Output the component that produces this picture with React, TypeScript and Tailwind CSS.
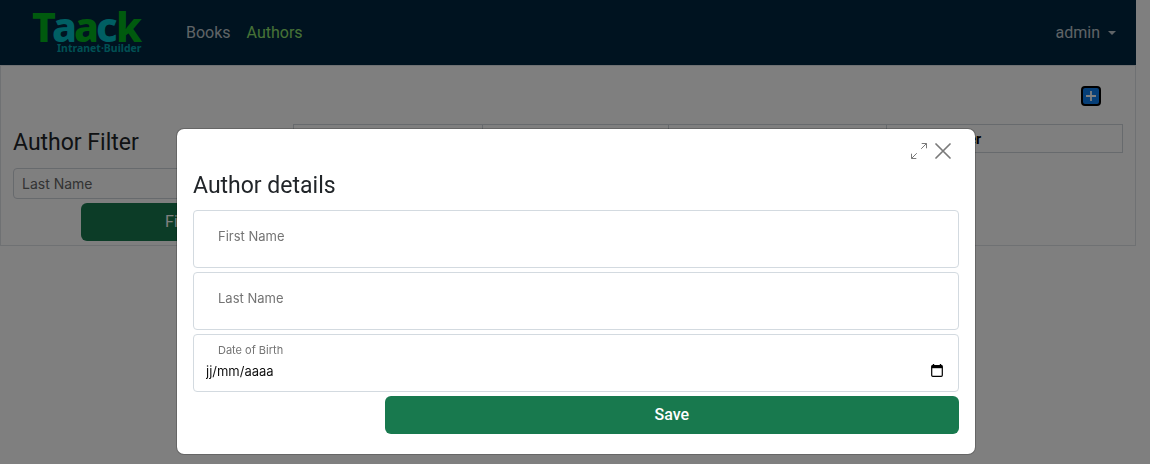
import React from "react";

function Logo() {
  return (
    <svg width="112" height="58" viewBox="0 0 112 58" role="img" aria-label="Taack Intranet-Builder" fontFamily="'Noto Sans', 'Open Sans', sans-serif" fontWeight="800">
      <g fontSize="41">
        <text x="0" y="38" fill="#00b41c">T</text>
        <text x="20" y="38" fill="#00bec6">a</text>
        <text x="42" y="38" fill="#00b41c">a</text>
        <text x="64" y="38" fill="#00bec6">c</text>
        <text x="84" y="38" fill="#00b41c">k</text>
      </g>
      <text x="25" y="48" fontSize="10.5" fontWeight="700" fill="#00a0a8">Intranet·Builder</text>
    </svg>
  );
}

function Navbar() {
  return (
    <nav className="flex h-[65px] items-center bg-[#002640] pr-5 pl-8 text-base">
      <a href="#home" className="block">
        <Logo />
      </a>
      <div className="ml-[42px] flex flex-1 gap-4">
        <a href="#books" className="text-white/75">Books</a>
        <a href="#authors" className="text-[#8fe36e]">Authors</a>
      </div>
      <button type="button" className="flex items-center gap-2 text-white/75">
        admin
        <span className="border-x-4 border-t-4 border-x-transparent border-t-current" />
      </button>
    </nav>
  );
}

function AuthorsPage() {
  return (
    <main className="border border-[#dee2e6] px-3 pb-1">
      <div className="flex justify-end pt-5 pr-[22px]">
        <button type="button" aria-label="Add author" className="grid size-5 place-items-center rounded-sm border-2 border-black bg-[#0d7ef0]">
          <svg width="12" height="12" viewBox="0 0 12 12" stroke="#fff" strokeWidth="1.8" aria-hidden="true">
            <path d="M6 1v10M1 6h10" />
          </svg>
        </button>
      </div>
      <div className="grid grid-cols-[272px_1fr] gap-2 pt-[18px]">
        <form className="flex flex-col" onSubmit={(e) => e.preventDefault()}>
          <h2 className="pt-[3px] pb-[9px] text-[23px] leading-8 text-[#212529]">Author Filter</h2>
          <input
            type="text"
            aria-label="Last Name"
            placeholder="Last Name"
            className="h-[31px] rounded-sm border border-[#ced4da] px-2 font-[Inter,sans-serif] text-sm placeholder:text-[#666]"
          />
          <button type="submit" className="mt-1 h-[38px] w-3/4 self-end rounded-md bg-[#18794e] text-white">Filter</button>
        </form>
        <table className="w-full table-fixed border-collapse self-start text-left text-sm font-bold">
          <colgroup>
            <col className="w-[189px]" />
            <col className="w-[186px]" />
            <col className="w-[218px]" />
            <col />
          </colgroup>
          <thead>
            <tr className="h-7">
              <th className="border border-[#ced4da] px-2" />
              <th className="border border-[#ced4da] px-2" />
              <th className="border border-[#ced4da] px-2" />
              <th className="border border-[#ced4da] px-2">Book Number</th>
            </tr>
          </thead>
        </table>
      </div>
    </main>
  );
}

const fieldBox = "flex h-[58px] flex-col rounded-sm border border-[#d3dae0] text-[#212529]";

function TextField({ id, label }: { id: string; label: string }) {
  return (
    <div className={fieldBox}>
      <label htmlFor={id} className="px-6 pt-[15px] font-[Inter,sans-serif] text-[13px] leading-5 text-[#747474]">{label}</label>
      <input id={id} type="text" className="min-h-0 flex-1 px-3 text-sm outline-none" />
    </div>
  );
}

function DateField({ id, label }: { id: string; label: string }) {
  return (
    <div className={fieldBox}>
      <label htmlFor={id} className="px-6 pt-[7px] font-[Inter,sans-serif] text-[11px] leading-4 text-[#747474]">{label}</label>
      <div className="flex items-center pr-[15px] pl-3">
        <input id={id} type="text" placeholder="jj/mm/aaaa" className="h-6 min-w-0 flex-1 pt-0.5 font-[Inter,sans-serif] text-[13px] outline-none placeholder:text-[#111]" />
        <button type="button" aria-label="Open calendar">
          <svg width="12" height="13" viewBox="0 0 12 13" aria-hidden="true" className="block">
            <path d="M2.5 0v2M9.5 0v2" stroke="#000" strokeWidth="1.4" />
            <rect x="0.7" y="1.7" width="10.6" height="10.6" rx="1" fill="none" stroke="#000" strokeWidth="1.2" />
            <path d="M.7 1.2h10.6v3H.7z" />
          </svg>
        </button>
      </div>
    </div>
  );
}

function AuthorDialog() {
  return (
    <div className="fixed inset-0 flex items-start justify-center overflow-hidden bg-black/50 pt-32 pl-0.5">
      <section role="dialog" aria-modal="true" aria-labelledby="dialog-title" className="w-full max-w-[800px] rounded-lg border border-black/20 bg-white bg-clip-padding px-4 pb-5">
        <div className="flex h-10 items-center justify-end gap-2 pt-1 pr-2 text-[#7a7a7a]">
          <button type="button" aria-label="Expand">
            <svg width="16" height="16" viewBox="0 0 16 16" fill="none" stroke="currentColor" aria-hidden="true" className="block">
              <path d="M10.2 5.8 15.5.5M10.7 .5h4.8v4.8M5.8 10.2.5 15.5M.5 10.7v4.8h4.8" />
            </svg>
          </button>
          <button type="button" aria-label="Close">
            <svg width="16" height="16" viewBox="0 0 16 16" fill="none" stroke="currentColor" strokeWidth="1.7" strokeLinecap="round" aria-hidden="true" className="block">
              <path d="M1 1l14 14M15 1 1 15" />
            </svg>
          </button>
        </div>
        <form className="flex flex-col gap-1" onSubmit={(e) => e.preventDefault()}>
          <h2 id="dialog-title" className="pt-px pb-1 text-[23px] leading-8 text-[#212529]">Author details</h2>
          <TextField id="first-name" label="First Name" />
          <TextField id="last-name" label="Last Name" />
          <DateField id="birth-date" label="Date of Birth" />
          <button type="submit" className="h-[38px] w-3/4 self-end rounded-md bg-[#18794e] font-medium text-white">Save</button>
        </form>
      </section>
    </div>
  );
}

export default function App() {
  return (
    <div className="min-h-screen bg-white pr-3.5 font-[Roboto,sans-serif]">
      <Navbar />
      <AuthorsPage />
      <AuthorDialog />
    </div>
  );
}
